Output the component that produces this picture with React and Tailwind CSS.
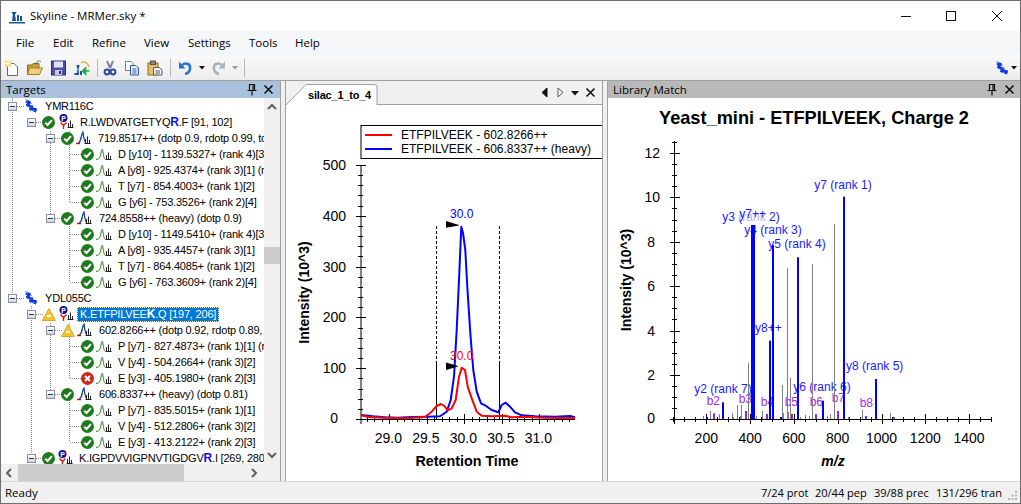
import React from "react";

const UI = "[font-family:'Open_Sans',sans-serif]";

const Chk = () => (
  <svg width="13" height="13" viewBox="0 0 13 13" className="shrink-0">
    <circle cx="6.5" cy="6.5" r="6.5" fill="#1f7a1f" />
    <path d="M3.2 6.6 L5.6 9 L9.9 4.2" fill="none" stroke="#fff" strokeWidth="2" />
  </svg>
);
const Err = () => (
  <svg width="13" height="13" viewBox="0 0 13 13" className="shrink-0">
    <circle cx="6.5" cy="6.5" r="6.5" fill="#c4281c" />
    <path d="M4 4 L9 9 M9 4 L4 9" fill="none" stroke="#fff" strokeWidth="2" />
  </svg>
);
const Warn = () => (
  <svg width="14" height="13" viewBox="0 0 14 13" className="shrink-0">
    <path d="M7 0.5 L13.6 12.5 L0.4 12.5 Z" fill="#f5c431" stroke="#d69a12" strokeWidth="0.8" />
    <rect x="5" y="7" width="4" height="1.6" fill="#fff" />
  </svg>
);
const Exp = () => (
  <svg width="9" height="9" viewBox="0 0 9 9" className="shrink-0">
    <defs>
      <linearGradient id="ex" x1="0" y1="0" x2="0" y2="1">
        <stop offset="0" stopColor="#ffffff" />
        <stop offset="1" stopColor="#cfd3da" />
      </linearGradient>
    </defs>
    <rect x="0.5" y="0.5" width="8" height="8" fill="url(#ex)" stroke="#8a8f99" />
    <path d="M2 4.5 H7" stroke="#2b3a55" />
  </svg>
);
const Protein = () => (
  <svg width="16" height="16" viewBox="0 0 16 16" className="shrink-0">
    <path d="M3 3 L6.5 4.5 L4.5 7 L9 8.5 L7.5 11 L12.5 11.5 L11.5 14" fill="none" stroke="#1338e6" strokeWidth="3" strokeLinejoin="round" />
    <path d="M2 1.5 L5 3 M8 8 L10 7.5 M7 5 L9 5.5" stroke="#6fa8e8" strokeWidth="1" />
  </svg>
);
const Bars = ({ x = 0 }) => (
  <path d={`M${x} 13.5 H${x + 6} M${x + 1} 13 V9 M${x + 3} 13 V6.5 M${x + 5} 13 V10`} stroke="#222" strokeWidth="1" fill="none" />
);
const PepIco = () => (
  <svg width="15" height="16" viewBox="0 0 15 16" className="shrink-0">
    <circle cx="4.5" cy="4" r="4" fill="#12128a" />
    <text x="4.5" y="6.6" textAnchor="middle" fontSize="7" fontWeight="700" fill="#fff" fontFamily="'Liberation Sans',sans-serif">P</text>
    <path d="M1.5 8.5 L4.5 11.5 L7.5 8.5 M4.5 11.5 V15" fill="none" stroke="#e01010" strokeWidth="1.4" />
    <Bars x={8.5} />
  </svg>
);
const GroupIco = () => (
  <svg width="15" height="16" viewBox="0 0 15 16" className="shrink-0">
    <path d="M0 13.5 H4" stroke="#e01010" strokeWidth="1.4" />
    <path d="M2 13 C5 13 5 4 7 2 C7.5 6 8 12 10 13" fill="none" stroke="#1428d8" strokeWidth="1.2" />
    <path d="M3 13 C5 12 5.5 6 6.5 3" fill="none" stroke="#1e8a1e" strokeWidth="1" />
    <Bars x={8.5} />
  </svg>
);
const PeakIco = () => (
  <svg width="16" height="16" viewBox="0 0 16 16" className="shrink-0">
    <path d="M0 13.5 C3.5 13 4 12 5 7 C5.5 3 6.5 2 7 6 C7.5 10 8 12.5 9.5 13.5" fill="none" stroke="#1e8a1e" strokeWidth="1" />
    <Bars x={9.5} />
  </svg>
);

const B = ({ children }) => <b className="text-[12px] text-[#1010ee]">{children}</b>;
const rows = [
  { l: 0, t: "YMR116C" },
  { l: 1, s: "c", t: <>R.LWDVATGETYQ<B>R</B>.F [91, 102]</> },
  { l: 2, s: "c", t: "719.8517++ (dotp 0.9, rdotp 0.99, total ratio 0.25)" },
  { l: 3, s: "c", t: "D [y10] - 1139.5327+ (rank 4)[3] (ratio 0.25)" },
  { l: 3, s: "c", t: "A [y8] - 925.4374+ (rank 3)[1] (ratio 0.25)" },
  { l: 3, s: "c", t: "T [y7] - 854.4003+ (rank 1)[2]" },
  { l: 3, s: "c", t: "G [y6] - 753.3526+ (rank 2)[4]" },
  { l: 2, s: "c", t: "724.8558++ (heavy) (dotp 0.9)" },
  { l: 3, s: "c", t: "D [y10] - 1149.5410+ (rank 4)[3]" },
  { l: 3, s: "c", t: "A [y8] - 935.4457+ (rank 3)[1]" },
  { l: 3, s: "c", t: "T [y7] - 864.4085+ (rank 1)[2]" },
  { l: 3, s: "c", t: "G [y6] - 763.3609+ (rank 2)[4]" },
  { l: 0, t: "YDL055C" },
  { l: 1, s: "w", sel: true, t: <>K.ETFPILVEE<b className="text-[12px]">K</b>.Q [197, 206]</> },
  { l: 2, s: "w", t: "602.8266++ (dotp 0.92, rdotp 0.89, total ratio 0.25)" },
  { l: 3, s: "c", t: "P [y7] - 827.4873+ (rank 1)[1] (ratio 0.25)" },
  { l: 3, s: "c", t: "V [y4] - 504.2664+ (rank 3)[2]" },
  { l: 3, s: "e", t: "E [y3] - 405.1980+ (rank 2)[3]" },
  { l: 2, s: "c", t: "606.8337++ (heavy) (dotp 0.81)" },
  { l: 3, s: "c", t: "P [y7] - 835.5015+ (rank 1)[1]" },
  { l: 3, s: "c", t: "V [y4] - 512.2806+ (rank 3)[2]" },
  { l: 3, s: "c", t: "E [y3] - 413.2122+ (rank 2)[3]" },
  { l: 1, s: "c", t: <>K.IGPDVVIGPNVTIGDGV<B>R</B>.I [269, 280]</> },
];

function Row({ r }) {
  const st = r.s === "c" ? <Chk /> : r.s === "w" ? <Warn /> : r.s === "e" ? <Err /> : null;
  if (r.l === 0)
    return (
      <div className="flex h-4 items-center pl-2">
        <Exp />
        <div className="ml-[6px]"><Protein /></div>
        <span className="ml-[6px]">{r.t}</span>
      </div>
    );
  if (r.l === 1)
    return (
      <div className="flex h-4 items-center pl-[27px]">
        <Exp />
        <div className="ml-[6px] w-[14px]">{st}</div>
        <div className="ml-[3px]"><PepIco /></div>
        {r.sel ? (
          <span className="ml-[3px] h-[15px] border border-dotted border-[#ffe9a8] bg-[#0078d7] px-[2px] leading-[13px] text-white">{r.t}</span>
        ) : (
          <span className="ml-[6px]">{r.t}</span>
        )}
      </div>
    );
  if (r.l === 2)
    return (
      <div className="flex h-4 items-center pl-[46px]">
        <Exp />
        <div className="ml-[6px] w-[14px]">{st}</div>
        <div className="ml-[2px]"><GroupIco /></div>
        <span className="ml-[7px]">{r.t}</span>
      </div>
    );
  return (
    <div className="flex h-4 items-center pl-[81px]">
      <div className="w-[13px]">{st}</div>
      <div className="ml-[2px]"><PeakIco /></div>
      <span className="ml-[6px]">{r.t}</span>
    </div>
  );
}

const TreeLines = () => {
  const v = [[12, 98, 298], [31, 306, 458], [50, 131, 218], [50, 323, 394], [69, 131, 202], [69, 222, 282], [69, 323, 378], [69, 398, 442]];
  const ys = rows.map((r, i) => ({ l: r.l, y: 106 + i * 16 }));
  return (
    <svg className="pointer-events-none absolute left-0 top-0" width="264" height="366" viewBox="0 98 264 366">
      {v.map(([x, a, b], i) => (
        <line key={i} x1={x + 0.5} x2={x + 0.5} y1={a} y2={b} stroke="#8a8a8a" strokeDasharray="1 1" />
      ))}
      {ys.map((o, i) => {
        const x0 = [12, 31, 50, 69][o.l];
        const x1 = [25, 43, 62, 81][o.l];
        return <line key={i} x1={x0 + 1} x2={x1} y1={o.y + 0.5} y2={o.y + 0.5} stroke="#8a8a8a" strokeDasharray="1 1" />;
      })}
    </svg>
  );
};

const Pin = () => (
  <svg width="12" height="13" viewBox="0 0 12 13">
    <path d="M3.5 1.5 H8.5 V7.5 H3.5 Z M7 1.5 V7.5 M1.5 7.5 H10.5 M6 7.5 V12.5" fill="none" stroke="#111" strokeWidth="1.2" />
  </svg>
);
const XIco = () => (
  <svg width="11" height="11" viewBox="0 0 11 11">
    <path d="M1.5 1.5 L9.5 9.5 M9.5 1.5 L1.5 9.5" stroke="#111" strokeWidth="1.6" />
  </svg>
);

const Chev = ({ d }) => (
  <svg width="10" height="10" viewBox="0 0 10 10">
    <path d={d} fill="none" stroke="#606060" strokeWidth="2" />
  </svg>
);

const I = ({ children, cls = "" }) => (
  <svg width="16" height="16" viewBox="0 0 16 16" className={"shrink-0 " + cls}>{children}</svg>
);
const Sep = ({ cls }) => <div className={"h-[18px] w-px bg-[#b9b9b9] " + cls} />;
const Arrow = ({ c, cls }) => (
  <svg width="6" height="4" viewBox="0 0 6 4" className={"shrink-0 " + cls}><path d="M0 0 H6 L3 3.5 Z" fill={c} /></svg>
);

function Toolbar() {
  return (
    <div className="flex h-[25px] shrink-0 items-center bg-gradient-to-b from-[#fafafa] to-[#ececec] pl-1">
      <I>
        <path d="M3.5 3.5 H10 L13.5 7 V15.5 H3.5 Z" fill="#fff" stroke="#5a6a80" />
        <rect x="1" y="0.5" width="6" height="6" fill="#f7dc6a" />
        <path d="M4 0.5 V6.5 M1 3.5 H7" stroke="#fff" />
      </I>
      <I cls="ml-[7px]">
        <path d="M0.5 5 H5 L6 3.5 H12 V14.5 H0.5 Z" fill="#c79a3a" stroke="#8c6a20" />
        <path d="M2.5 8 H15.5 L12.5 14.5 H0.5 Z" fill="#f4cf7a" stroke="#a37d2a" />
        <path d="M9 3 C10 1 12 0.5 14 1.5" fill="none" stroke="#5b7fa8" />
      </I>
      <I cls="ml-[8px]">
        <rect x="0.5" y="1" width="14" height="14" fill="#4a4fb0" stroke="#2c2f78" />
        <rect x="3" y="1.5" width="9" height="6" fill="#dfe3f7" />
        <rect x="4" y="10" width="7" height="5" fill="#c9cbd8" />
        <rect x="8" y="11" width="2" height="3" fill="#2c2f78" />
      </I>
      <I cls="ml-[7px]">
        <path d="M7 3 C9 1 14 2 15 7" fill="none" stroke="#e3b04b" strokeWidth="1.5" />
        <path d="M4 1 V4 M2.5 5 H5.5 L5 8 H4.5 L5 15 H0.5 V13 H3 L3.5 8 H3 Z M6 11 H8 V15 H6 Z" fill="#1a4f9c" />
        <path d="M15.5 11 H11 M11.5 8 L8.5 11 L11.5 14 Z" fill="#1fae3c" stroke="#1fae3c" strokeWidth="1.6" />
      </I>
      <Sep cls="ml-[7px]" />
      <I cls="ml-[4px]">
        <path d="M5 1 L8 8 M11 1 L8 8" stroke="#7c8797" strokeWidth="2" />
        <circle cx="5" cy="12" r="2.4" fill="none" stroke="#2b4a9c" strokeWidth="2" />
        <circle cx="11" cy="12" r="2.4" fill="none" stroke="#2b4a9c" strokeWidth="2" />
      </I>
      <I cls="ml-[6px]">
        <path d="M1.5 1.5 H7 L9 3.5 V10.5 H1.5 Z" fill="#fff" stroke="#6c7fa0" />
        <path d="M6.5 5.5 H12 L14.5 8 V15 H6.5 Z" fill="#e8eefb" stroke="#2d5aa8" />
        <path d="M8.5 9 H12.5 M8.5 11 H12.5 M8.5 13 H12.5" stroke="#2d5aa8" />
      </I>
      <I cls="ml-[7px]">
        <rect x="1" y="3" width="10" height="12" fill="#e6bd68" stroke="#8c6a20" />
        <rect x="3.5" y="1" width="5" height="3.5" fill="#888" stroke="#555" />
        <path d="M6.5 7.5 H12.5 L15 10 V15 H6.5 Z" fill="#eef1f6" stroke="#565f70" />
        <path d="M8.5 11 H13 M8.5 13 H13" stroke="#565f70" />
      </I>
      <Sep cls="ml-[7px]" />
      <I cls="ml-[7px]">
        <path d="M4 5 C8 2 13 4 12 9 C11.5 12 9 13.5 7 14" fill="none" stroke="#2a72c8" strokeWidth="2.6" />
        <path d="M1 1.5 V8.5 H7.5 Z" fill="#2a72c8" />
      </I>
      <Arrow c="#111" cls="ml-[5px]" />
      <I cls="ml-[5px]">
        <path d="M12 5 C8 2 3 4 4 9 C4.5 12 7 13.5 9 14" fill="none" stroke="#a9b2b8" strokeWidth="2.6" />
        <path d="M15 1.5 V8.5 H8.5 Z" fill="#a9b2b8" />
      </I>
      <Arrow c="#9a9a9a" cls="ml-[6px]" />
      <Sep cls="ml-[6px]" />
      <div className="ml-auto mr-[4px] flex items-center">
        <Protein />
        <Arrow c="#111" cls="ml-[1px]" />
      </div>
    </div>
  );
}

const F = "'Liberation Sans',sans-serif";

function range(a, b, s) {
  const out = [];
  for (let v = a; v <= b + 1e-6; v += s) out.push(v);
  return out;
}

const blue = "361,415 373,416.3 385,417.3 398,417.7 412,417 428,416.7 440,416.3 446.7,411.7 450.7,400 454,376.7 456.7,330 459,280 461.3,226.7 463,233 465.3,250 467.3,286.7 470.3,333 473.3,370 476.7,391.7 481,403.3 485,405.3 491.7,410 498.3,412.3 501.7,405 505.7,402.7 510,406.7 515,412.3 521.7,415.3 535,416.3 555,416.7 570,416 575,417.3";
const red = "361,415 368.3,417 385,417.7 405,418.3 425,417 431.7,411.7 436.7,406 441,404 444.3,406 447.7,410.3 451.7,408.3 455.7,400 459,376.7 461.7,367.7 465,370 467.7,386.7 471.7,398.3 476.7,411.7 481.7,415.7 491.7,416.3 505,415.7 511.7,417.3 525,416.7 545,417.7 575,418.3";

function Chrom() {
  const yv = (v) => 419 - v * 0.508;
  const xv = (t) => 464.3 + (t - 30) * 75;
  return (
    <svg width="316" height="376" viewBox="286 105 316 376" className="block bg-white" fontFamily={F}>
      <rect x="361" y="125.5" width="250" height="33" fill="#fff" stroke="#000" />
      <line x1="365" x2="392" y1="135" y2="135" stroke="#f00" strokeWidth="2" />
      <line x1="365" x2="392" y1="149" y2="149" stroke="#00f" strokeWidth="2" />
      <text x="401" y="139.3" fontSize="12">ETFPILVEEK - 602.8266++</text>
      <text x="401" y="153.3" fontSize="12">ETFPILVEEK - 606.8337++ (heavy)</text>

      <line x1="361" x2="361" y1="165" y2="424" stroke="#000" />
      <line x1="356" x2="575" y1="419.5" y2="419.5" stroke="#000" />
      {range(0, 500, 20).map((v) => (
        <line key={v} x1={v % 100 === 0 ? 356 : 358} x2={v % 100 === 0 ? 366 : 363} y1={Math.round(yv(v)) + 0.5} y2={Math.round(yv(v)) + 0.5} stroke="#000" />
      ))}
      {[500, 400, 300, 200, 100].map((v) => (
        <text key={v} x="346" y={yv(v) + 5} textAnchor="end" fontSize="14">{v}</text>
      ))}
      <text x="338" y="423" textAnchor="end" fontSize="14">0</text>
      {range(28.7, 31.4, 0.1).map((t, i) => {
        const maj = Math.abs(t * 2 - Math.round(t * 2)) < 0.01;
        return <line key={i} x1={Math.round(xv(t)) + 0.5} x2={Math.round(xv(t)) + 0.5} y1={maj ? 414 : 417} y2={maj ? 424 : 422} stroke="#000" />;
      })}
      {[29, 29.5, 30, 30.5, 31].map((t) => (
        <text key={t} x={xv(t) - 1} y="443" textAnchor="middle" fontSize="14">{t.toFixed(1)}</text>
      ))}
      <text x="467" y="466" textAnchor="middle" fontSize="14.3" fontWeight="700">Retention Time</text>
      <text transform="translate(309 292.5) rotate(-90)" textAnchor="middle" fontSize="14" fontWeight="700">Intensity (10^3)</text>

      <line x1="436.5" x2="436.5" y1="226" y2="364" stroke="#000" strokeDasharray="3 2" />
      <line x1="499.5" x2="499.5" y1="226" y2="364" stroke="#000" strokeDasharray="3 2" />
      <line x1="436.5" x2="436.5" y1="364" y2="419" stroke="#000" />
      <line x1="499.5" x2="499.5" y1="364" y2="419" stroke="#000" />

      <polyline points={blue} fill="none" stroke="#00f" strokeWidth="2" strokeLinejoin="round" />
      <polyline points={red} fill="none" stroke="#f00" strokeWidth="2" strokeLinejoin="round" />

      <path d="M446 221 L459 225 L459 225.5 L446 227.8 Z" fill="#000" />
      <path d="M446 362.5 L458 366 L458 366.5 L446 370 Z" fill="#000" />
      <text x="461.7" y="217.7" textAnchor="middle" fontSize="12" fill="#00f">30.0</text>
      <text x="461.7" y="360" textAnchor="middle" fontSize="12" fill="#f00">30.0</text>
    </svg>
  );
}

const greys = [[787.3, 268], [812.3, 264], [834.3, 224], [747.7, 363], [781.7, 385], [790.3, 378], [737.3, 405], [741.3, 405], [731.7, 413], [709.7, 411], [703, 416], [719.3, 414], [762.3, 411], [783.3, 413], [755.7, 416], [800, 417], [805, 415], [809, 416], [826.7, 416], [830, 414], [862.3, 410], [890.3, 413], [848, 417], [788, 412], [740, 416], [733, 417]];
const blues = [[844, 196.7, 2], [876, 379, 2], [753, 225, 4], [773, 245, 2], [798, 257.3, 2], [770, 340.7, 2], [823, 400.7, 2], [723, 402.3, 2], [706.7, 417, 2], [781, 417, 2]];
const purples = [[714, 413.3], [746, 411], [767.3, 414], [791.7, 414], [816, 414], [838, 411], [866, 416], [893.7, 417]];
const bluel = [["y7 (rank 1)", 814.3, 189], ["y3 (rank 2)", 722.3, 221.3], ["y4 (rank 3)", 744.3, 234.3], ["y5 (rank 4)", 768.3, 248.3], ["y8++", 755, 331.7], ["y8 (rank 5)", 846, 370], ["y2 (rank 7)", 694.3, 392.7], ["y6 (rank 6)", 793.3, 391]];
const purplel = [["b2", 706.7, 404.7], ["b3", 738.7, 402.7], ["b4", 760.7, 406], ["b5", 784.7, 406], ["b6", 809.7, 406], ["b7", 831.7, 401.7], ["b8", 859.7, 407]];

function Lib() {
  const yv = (v) => 419.3 - v * 22.2;
  const xv = (m) => 662.5 + m * 0.219;
  return (
    <svg width="413" height="383" viewBox="608 98 413 383" className="block bg-white" fontFamily={F}>
      <text x="814" y="124.3" textAnchor="middle" fontSize="18.2" fontWeight="700">Yeast_mini - ETFPILVEEK, Charge 2</text>
      <line x1="674.5" x2="674.5" y1="141" y2="424" stroke="#000" />
      <line x1="670" x2="991" y1="419.5" y2="419.5" stroke="#000" />
      {range(0, 12.5, 0.5).map((v) => {
        const maj = Math.abs(v / 2 - Math.round(v / 2)) < 0.01;
        return <line key={v} x1={maj ? 670 : 672} x2={maj ? 680 : 677} y1={Math.round(yv(v)) + 0.5} y2={Math.round(yv(v)) + 0.5} stroke="#000" />;
      })}
      {[12, 10].map((v) => <text key={v} x="660" y={yv(v) + 5} textAnchor="end" fontSize="14">{v}</text>)}
      {[8, 6, 4, 2].map((v) => <text key={v} x="655" y={yv(v) + 5} textAnchor="end" fontSize="14">{v}</text>)}
      <text x="655" y="423" textAnchor="end" fontSize="14">0</text>
      {range(50, 1500, 50).map((m) => {
        const maj = m % 200 === 0;
        return <line key={m} x1={Math.round(xv(m)) + 0.5} x2={Math.round(xv(m)) + 0.5} y1={maj ? 414 : 417} y2={maj ? 424 : 422} stroke="#000" />;
      })}
      {range(200, 1400, 200).map((m) => (
        <text key={m} x={xv(m)} y="443" textAnchor="middle" fontSize="14">{m}</text>
      ))}
      <text x="833" y="466" textAnchor="middle" fontSize="14" fontWeight="700" fontStyle="italic">m/z</text>
      <text transform="translate(630.5 280) rotate(-90)" textAnchor="middle" fontSize="14" fontWeight="700">Intensity (10^3)</text>

      {bluel.map(([t, x, y]) => <text key={t} x={x} y={y} fontSize="12" fill="#1a1aff">{t}</text>)}
      <rect x="739" y="208" width="28" height="13" fill="#fff" opacity="0.65" />
      <text x="739.3" y="218.3" fontSize="12" fill="#1a1aff">y7++</text>
      {purplel.map(([t, x, y]) => <text key={t} x={x} y={y} fontSize="12" fill="#a02be8">{t}</text>)}

      {greys.map(([x, y], i) => <line key={i} x1={Math.round(x) + 0.5} x2={Math.round(x) + 0.5} y1={y} y2="419" stroke="#808080" />)}
      {blues.map(([x, y, w], i) => <rect key={i} x={Math.round(x - w / 2)} y={y} width={w} height={419 - y} fill="#0000ff" />)}
      {purples.map(([x, y], i) => <rect key={i} x={Math.round(x - 1)} y={y} width="2" height={419 - y} fill="#8a2be2" />)}
    </svg>
  );
}

export default function App() {
  return (
    <div className={"relative flex h-[504px] w-[1021px] flex-col overflow-hidden bg-[#f0f0f0] text-black " + UI}>
      <div className="flex h-[31px] shrink-0 items-center bg-white pl-[9px] text-[11.5px]">
        <svg width="17" height="16" viewBox="0 0 17 16" className="shrink-0">
          <path d="M5 0 V3 M2.5 4 H7.5 L6.5 6 H6 L7 13 H3 L4 6 H3.5 Z M8 7 H10 V13 H8 Z M11 8 H13 V13 H11 Z M0 14 H16 V15.5 H0 Z" fill="#13568f" />
        </svg>
        <span className="ml-[4px]">Skyline - MRMer.sky *</span>
        <div className="ml-auto flex h-full items-center">
          <svg width="44" height="30" viewBox="0 0 44 30"><path d="M0 15.5 H10" stroke="#111" /></svg>
          <svg width="43" height="30" viewBox="0 0 43 30"><rect x="1.5" y="10.5" width="9" height="9" fill="none" stroke="#111" /></svg>
          <svg width="33" height="30" viewBox="0 0 33 30"><path d="M4 10 L14 20 M14 10 L4 20" stroke="#111" /></svg>
        </div>
      </div>

      <div className="flex h-6 shrink-0 items-center bg-[#f5f6f7] pl-4 text-[11.5px]">
        <span className="w-[37px]">File</span>
        <span className="w-[39px]">Edit</span>
        <span className="w-[52px]">Refine</span>
        <span className="w-[44px]">View</span>
        <span className="w-[61px]">Settings</span>
        <span className="w-[46px]">Tools</span>
        <span>Help</span>
      </div>

      <Toolbar />

      <div className="flex h-[401px] shrink-0 border-t border-[#a0a0a0]">
        <div className="flex w-[281px] shrink-0 flex-col border-r border-[#a0a0a0]">
          <div className="flex h-[17px] shrink-0 items-center justify-between bg-[#a9c1dc] pl-[6px] pr-[6px] text-[11.5px]">
            <span>Targets</span>
            <div className="flex items-center gap-[5px]"><Pin /><XIco /></div>
          </div>
          <div className="flex h-[366px] shrink-0">
            <div className="relative h-full w-[264px] overflow-hidden whitespace-nowrap bg-white text-[11px] tracking-[-0.2px] [font-family:'Liberation_Sans',sans-serif]">
              <TreeLines />
              <div className="relative">
                {rows.map((r, i) => <Row key={i} r={r} />)}
              </div>
            </div>
            <div className="relative flex w-[16px] flex-col items-center justify-between bg-[#f0f0f0] py-[4px]">
              <Chev d="M1 7 L5 3 L9 7" />
              <div className="absolute left-0 top-[149px] h-[17px] w-[16px] bg-[#cdcdcd]" />
              <Chev d="M1 3 L5 7 L9 3" />
            </div>
          </div>
          <div className="flex h-[17px] shrink-0 items-center bg-[#f0f0f0] pr-[17px]">
            <div className="flex w-[18px] justify-center"><Chev d="M7 1 L3 5 L7 9" /></div>
            <div className="h-full w-[166px] bg-[#cdcdcd]" />
            <div className="ml-auto flex w-[18px] justify-center"><Chev d="M3 1 L7 5 L3 9" /></div>
          </div>
        </div>

        <div className="w-[4px] shrink-0 bg-[#f0f0f0]" />

        <div className="flex w-[318px] shrink-0 flex-col border-x border-[#a0a0a0]">
          <div className="relative flex h-[24px] shrink-0 items-center justify-end gap-[5px] border-b border-[#a0a0a0] bg-[#f0f0f0] pr-[6px]">
            <svg width="93" height="24" viewBox="0 0 93 24" className="absolute left-0 top-0">
              <path d="M0 24 L20 3.5 H88 Q91 3.5 91 6 V24" fill="#fff" stroke="#a0a0a0" />
            </svg>
            <span className="absolute left-[22px] top-[7px] text-[11px] font-bold leading-[15px] tracking-[-0.2px] [font-family:'Liberation_Sans',sans-serif]">silac_1_to_4</span>
            <svg width="10" height="11" viewBox="0 0 10 11"><path d="M7 1 V10 L2 5.5 Z" fill="#111" stroke="#111" /></svg>
            <svg width="10" height="11" viewBox="0 0 10 11"><path d="M3 1 V10 L8 5.5 Z" fill="#fff" stroke="#555" /></svg>
            <svg width="10" height="11" viewBox="0 0 10 11"><path d="M1 4 H9 L5 8.5 Z" fill="#111" /></svg>
            <XIco />
          </div>
          <Chrom />
        </div>

        <div className="w-[4px] shrink-0 bg-[#f0f0f0]" />

        <div className="flex flex-1 flex-col border-l border-[#a0a0a0]">
          <div className="flex h-[17px] shrink-0 items-center justify-between bg-[#b9b9b9] pl-[5px] pr-[6px] text-[11.5px]">
            <span>Library Match</span>
            <div className="flex items-center gap-[6px]"><Pin /><XIco /></div>
          </div>
          <Lib />
        </div>
      </div>

      <div className="flex flex-1 items-center whitespace-nowrap border-t border-[#d6d6d6] bg-[#f0f0f0] pl-[5px] pr-[3px] text-[11.5px]">
        <span>Ready</span>
        <div className="ml-auto flex items-center text-[11px]">
          <span className="w-[54px]">7/24 prot</span>
          <span className="w-[59px]">20/44 pep</span>
          <span className="w-[62px]">39/88 prec</span>
          <span className="w-[71px]">131/296 tran</span>
          <svg width="11" height="11" viewBox="0 0 11 11" className="self-end">
            <path d="M8 1h2v2H8z M4.5 4.5h2v2h-2z M8 4.5h2v2H8z M1 8h2v2H1z M4.5 8h2v2h-2z M8 8h2v2H8z" fill="#b5b5b5" />
          </svg>
        </div>
      </div>

      <div className="pointer-events-none absolute inset-0 border border-[#6e6e6e]" />
    </div>
  );
}
